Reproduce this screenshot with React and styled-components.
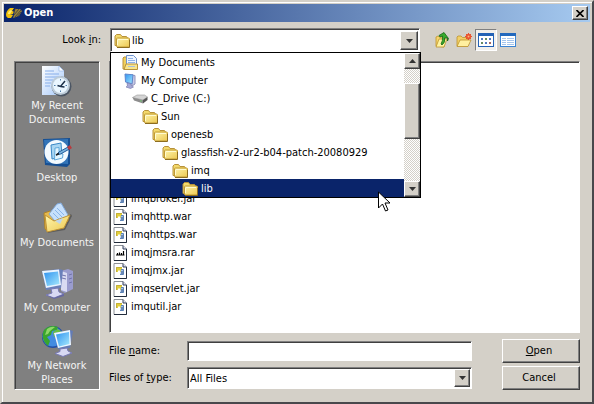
import React from 'react';
import styled, { createGlobalStyle, css } from 'styled-components';

const FACE = '#d4d0c8';
const NAVY = '#0a246a';
const SHADOW = '#808080';
const DARK = '#404040';

const GlobalStyle = createGlobalStyle`
  * {
    box-sizing: border-box;
  }
  body {
    margin: 0;
    background: ${FACE};
    color: #000;
  }
  body, button, input, select {
    font-family: 'DejaVu Sans Condensed', 'DejaVu Sans', sans-serif;
    font-size: 11px;
    line-height: 14px;
  }
  svg {
    display: block;
    flex: none;
  }
`;

const raised = css`
  border: 1px solid;
  border-color: #fff ${DARK} ${DARK} #fff;
  box-shadow: inset -1px -1px ${SHADOW};
  background: ${FACE};
`;

const sunken = css`
  border: 1px solid;
  border-color: ${SHADOW} #fff #fff ${SHADOW};
  box-shadow: inset 1px 1px ${DARK};
`;

const Dialog = styled.div`
  min-height: 100vh;
  display: flex;
  flex-direction: column;
  padding: 2px 2px 0;
  border: 2px solid;
  border-color: ${FACE} #48484c #48484c ${FACE};
  box-shadow: inset 1px 1px #fff;
  background: ${FACE};
`;

const TitleBar = styled.header`
  height: 18px;
  display: flex;
  align-items: center;
  gap: 2px;
  padding: 0 2px;
  background: linear-gradient(to right, ${NAVY}, #a6caf0);
`;

const Title = styled.h1`
  flex: 1;
  margin: 0;
  color: #fff;
  font-size: 11px;
  line-height: 14px;
`;

const CloseButton = styled.button`
  ${raised}
  width: 16px;
  height: 14px;
  padding: 0 0 0 3px;
`;

const LookRow = styled.div`
  display: flex;
  align-items: center;
  padding: 6px 10px 9px 0;
`;

const LookLabel = styled.label`
  width: 97px;
  margin-right: 9px;
  text-align: right;
`;

const Combo = styled.div`
  position: relative;
  flex: 1;
`;

const ComboButton = styled.button`
  ${sunken}
  width: 100%;
  height: 24px;
  display: flex;
  align-items: center;
  gap: 2px;
  padding: 2px 1px 1px 3px;
  background: #fff;
  text-align: left;
`;

const ComboText = styled.span`
  flex: 1;
`;

const Arrow = styled.span`
  ${raised}
  width: 18px;
  align-self: stretch;
  display: flex;
  align-items: center;
  justify-content: center;
`;

const Popup = styled.div`
  position: absolute;
  z-index: 1;
  top: 24px;
  left: 0;
  right: -1px;
  display: flex;
  border: 1px solid #000;
  background: #fff;
`;

const Tree = styled.ul`
  flex: 1;
  margin: 0;
  padding: 0;
  list-style: none;
`;

const TreeItem = styled.li`
  height: 18px;
  display: flex;
  align-items: center;
  gap: 3px;
  padding-top: 2px;
  padding-left: ${({ $level }) => 1 + $level * 10}px;
  background: ${({ $selected }) => ($selected ? NAVY : '#fff')};
  color: ${({ $selected }) => ($selected ? '#fff' : '#000')};
  white-space: nowrap;
`;

const ScrollBar = styled.div`
  width: 16px;
  display: flex;
  flex-direction: column;
  background: repeating-conic-gradient(${FACE} 0 25%, #fff 0 50%) 0 0 / 2px 2px;
`;

const ScrollButton = styled.button`
  ${raised}
  height: 16px;
  display: flex;
  align-items: center;
  justify-content: center;
  padding: 0;
`;

const Thumb = styled.div`
  ${raised}
  height: 56px;
  margin: 14px 0 auto;
`;

const Pointer = styled.svg`
  position: absolute;
  z-index: 2;
  left: 268px;
  top: 163px;
`;

const Toolbar = styled.div`
  width: 160px;
  display: flex;
  align-items: center;
  padding-left: 11px;
`;

const ToolButton = styled.button`
  width: 22px;
  height: 22px;
  display: flex;
  align-items: center;
  justify-content: center;
  padding: 0;
  border: 1px solid transparent;
  background: none;
  ${({ $pressed }) =>
    $pressed &&
    css`
      border-color: ${SHADOW} #fff #fff ${SHADOW};
      background: #f2f0ec;
    `}
`;

const Content = styled.main`
  flex: 1;
  display: grid;
  grid-template-columns: 86px 1fr;
  gap: 9px;
  padding: 0 10px 12px;
`;

const Places = styled.nav`
  ${sunken}
  padding: 1px;
  background: ${SHADOW};
`;

const Place = styled.a`
  height: 65px;
  display: flex;
  flex-direction: column;
  align-items: center;
  justify-content: center;
  gap: 2px;
  color: #f4f4f4;
  text-align: center;
  text-decoration: none;
  white-space: pre-line;
`;

const Right = styled.div`
  display: flex;
  flex-direction: column;
`;

const FileList = styled.ul`
  ${sunken}
  flex: 1;
  margin: 0;
  padding: 127px 3px 16px;
  background: #fff;
  list-style: none;
`;

const FileItem = styled.li`
  height: 18px;
  display: flex;
  align-items: center;
  gap: 3px;
  padding-top: 2px;
`;

const Form = styled.form`
  display: grid;
  grid-template-columns: 78px 1fr 78px;
  grid-template-rows: 24px 24px;
  row-gap: 3px;
  align-items: center;
  margin-top: 6px;
`;

const field = css`
  ${sunken}
  width: 100%;
  padding: 0 2px;
  border-radius: 0;
  background: #fff;
  outline: none;
`;

const TextInput = styled.input`
  ${field}
  display: block;
  height: 20px;
`;

const SelectBox = styled.div`
  display: grid;
  grid-template-columns: 1fr 18px;

  select {
    ${field}
    grid-area: 1 / 1 / 2 / 3;
    height: 22px;
    padding-top: 2px;
    appearance: none;
    color: #000;
  }
  ${Arrow} {
    grid-area: 1 / 2;
    z-index: 1;
    margin: 2px 2px 2px 0;
    width: 16px;
    pointer-events: none;
  }
`;

const PushButton = styled.button`
  ${raised}
  height: 24px;
  padding: 0 4px 0 0;
`;

const FieldCell = styled.div`
  margin-right: 30px;
`;

function Triangle({ up }) {
  return (
    <svg width="7" height="4" viewBox="0 0 7 4">
      <path d={up ? 'M0 4h7L3.5 0z' : 'M0 0h7L3.5 4z'} fill="#333" />
    </svg>
  );
}

function FolderIcon() {
  return (
    <svg width="16" height="16" viewBox="0 0 16 16">
      <path d="M1 12.5V3l1.500-1.500h4L8 3.500h4.500L13.500 5v8z" fill="#f3d96b" stroke="#b8923a" />
      <path d="M3.500 5h11q1 0 1 1v7q0 1-1 1h-11q-1 0-1-1V6q0-1 1-1z" fill="url(#folder)" stroke="#c19a35" />
      <path d="M4 6.500h10M3.500 7v5" stroke="#fffbd0" fill="none" />
      <path d="M3 14.500h12.500V7" stroke="#8d6d20" fill="none" />
    </svg>
  );
}

function DocumentsIcon() {
  return (
    <svg width="16" height="16" viewBox="0 0 16 16">
      <path d="M1 14V3l1-1h4v12z" fill="#f0cf5c" stroke="#b8923a" />
      <path d="M4.500 11V.5h7l3 3V11z" fill="#eef5ff" stroke="#6f93cf" />
      <path d="M6 3.500h5M6 5.500h7M6 7.500h7" stroke="#8fb2e8" />
      <path d="M2 14.500L4 9h11.500v5.500z" fill="#f8e58c" stroke="#b8923a" />
      <path d="M6 11.500h7" stroke="#a9bfe0" />
    </svg>
  );
}

function ComputerIcon() {
  return (
    <svg width="16" height="16" viewBox="0 0 16 16">
      <path d="M10 2l3 .5V11l-3 2z" fill="#c9cbe6" stroke="#9294bd" />
      <path d="M3 1l8 .8-1 9L3.500 9z" fill="url(#screen)" stroke="#5f86cc" />
      <path d="M5 10l4 1 .5 2 2 1-3 1.500L4 14l1.500-1z" fill="#a7a9d6" stroke="#7173a9" strokeWidth=".6" />
    </svg>
  );
}

function DriveIcon() {
  return (
    <svg width="16" height="16" viewBox="0 0 16 16">
      <path d="M.5 6.500L5 4h7.500l3 2-4.500 3z" fill="#d4d4d4" stroke="#999" strokeWidth=".6" />
      <path d="M.5 6.500L11 9v3.500L2 9.500z" fill="#8d8d8d" />
      <path d="M11 9l4.500-3v3L11 12.500z" fill="#555" />
      <circle cx="9" cy="10" r=".7" fill="#6d6" />
    </svg>
  );
}

function JarIcon() {
  return (
    <svg width="15" height="16" viewBox="0 0 15 16">
      <path d="M1 .5h9l3.500 3.500v11.500H1z" fill="#fff" stroke="#8c9096" />
      <path d="M13.500 4v11.500H1" fill="none" stroke="#222c3c" />
      <path d="M10 .5V4h3.500" fill="#dde" stroke="#33405a" />
      <rect x="3" y="4" width="6" height="5" fill="#e2cf3c" />
      <path d="M3.500 9V4.500H9" fill="none" stroke="#c2ae38" />
      <path d="M8 6.500h2.500v5H7" fill="#a9c4e6" stroke="#5c83b6" />
      <path d="M5 7.500h2v2H5z" fill="#fff" />
      <path d="M9 8v3" stroke="#2c4e88" />
    </svg>
  );
}

function RarIcon() {
  return (
    <svg width="15" height="16" viewBox="0 0 15 16">
      <path d="M1 .5h9l3.500 3.500v11.500H1z" fill="#fff" stroke="#8c9096" />
      <path d="M13.500 4v11.500H1" fill="none" stroke="#222c3c" />
      <path d="M10 .5V4h3.500" fill="#dde" stroke="#33405a" />
      <path d="M3 10h8.500M4.500 10V8M6.500 10V7.500M8.500 10V8M10.500 10V6" fill="none" stroke="#000" strokeWidth="1.200" />
    </svg>
  );
}

function RecentIcon() {
  return (
    <svg width="32" height="32" viewBox="0 0 32 32">
      <path d="M1 1h17l5 5v24H1z" fill="url(#paper)" />
      <path d="M18 1v5h5z" fill="#fff" stroke="#98b7ea" strokeWidth=".7" />
      <path d="M4 6h9M4 9h14M4 12h14M4 15h8M4 18h6M4 21h5" stroke="#86ade9" />
      <circle cx="20.500" cy="21.500" r="10" fill="#4c5664" />
      <circle cx="19.500" cy="20.500" r="9.500" fill="#bccbd8" />
      <circle cx="19.500" cy="20.500" r="7.500" fill="#eaf6ff" />
      <path d="M19.500 14v1.500M19.500 25.500V27M13 20.500h1.500M24.500 20.500H26" stroke="#4d7caa" />
      <path d="M24 16l-4.500 5.500-3-1M19.500 21.500l4 .5" stroke="#1b2f48" strokeWidth="1.500" fill="none" />
    </svg>
  );
}

function DesktopIcon() {
  return (
    <svg width="32" height="32" viewBox="0 0 32 32">
      <path d="M2 2l27-1v26l-3 3-22-2z" fill="#174f92" />
      <path d="M3 3l24-1v25L5 26z" fill="#3274b8" />
      <circle cx="15.500" cy="15" r="12" fill="#f3faff" />
      <path d="M10 8l10-2 1 14-10 2z" fill="#a9d6f2" stroke="#3988c6" />
      <path d="M14 11l4-.5v6l4 .5-.5 4-8 2z" fill="#e3f6ff" stroke="#60a9db" />
      <path d="M15 18l3-3 9-5 1.500 2-9 5z" fill="#79b4df" stroke="#215b9b" />
      <path d="M26 10l3-2 2 3-3 2z" fill="#b83a3e" />
      <path d="M15 18l3-1.500" stroke="#222" strokeWidth="1.500" />
    </svg>
  );
}

function MyDocumentsIcon() {
  return (
    <svg width="32" height="32" viewBox="0 0 32 32">
      <path d="M6 31L24 28l7-14-1-2z" fill="#444" opacity=".6" />
      <path d="M3 11l6-2 2 2 16 1v7L7 29l-3-2z" fill="#e6b94d" stroke="#ad8228" />
      <path d="M8 12l8-10 4-1 7 12-9 11z" fill="#c7e0fc" stroke="#80a9db" />
      <path d="M14 8l7 7M12 11l7 7M16 6l7 7" stroke="#88b5eb" />
      <path d="M4 13l9 6 16-6-6 13-17 4z" fill="url(#folder)" stroke="#bf9335" />
      <path d="M14 19l8-3-3 6z" fill="#bdd5ee" />
    </svg>
  );
}

function MyComputerIcon() {
  return (
    <svg width="32" height="32" viewBox="0 0 32 32">
      <path d="M20 4l7-2 5 2v18l-8 4-4-2z" fill="#9a9cce" />
      <path d="M20 4l6 2v19l-6-2z" fill="#d9dbf2" />
      <path d="M21 8l4 1M21 11l4 1M28 8l3-1M28 12l3-1M28 16l3-1" stroke="#7173ac" />
      <path d="M1 4l17-2 4 1-2 18-15 2z" fill="#6a80bb" />
      <path d="M1 4l17-1.500L20 18 5 21z" fill="#e9f4ff" />
      <path d="M3 6l14-1.500L18.500 17 6 19z" fill="url(#screen)" />
      <path d="M10 22l7-1 1 4 5 2-10 4-8-3 6-2z" fill="#d8d9f3" stroke="#7779b5" />
      <path d="M5 28l8 3 10-4v2l-10 3z" fill="#6668a1" />
    </svg>
  );
}

function NetworkIcon() {
  return (
    <svg width="32" height="32" viewBox="0 0 32 32">
      <circle cx="12" cy="12" r="11" fill="#234fa6" />
      <circle cx="11.500" cy="11.500" r="10" fill="#438be0" />
      <path d="M3 5Q9-1 17 2l-1 3-5 1-1 4-4 2 3 4-2 5Q-1 14 3 5z" fill="#39a52e" />
      <path d="M6 4q4-3 8-2l-5 4-2 3-3 1z" fill="#8ed768" />
      <path d="M12 7l5-3 4 3-3 4-5 1z" fill="#68c040" />
      <path d="M13 8l16-3 3 1-3 17-12 1z" fill="#637bb5" />
      <path d="M13 8l16-3 1 15-13 3z" fill="#edf7ff" />
      <path d="M15 9.500L28 7l.5 12-10.500 2.500z" fill="url(#screen)" />
      <path d="M19 24l7-1 1 3 4 2-9 3.500-8-3 5-2z" fill="#d8d9f3" stroke="#7779b5" />
    </svg>
  );
}

function AppIcon() {
  return (
    <svg width="16" height="12" viewBox="0 0 16 12">
      <path d="M0 8q0-4 4-7h4L6 4h2l-1 3H4l3 1-2 3H2q-2-1-2-3z" fill="#f2c20c" />
      <path d="M2 7q0-3 3-4l1 1-2 3z" fill="#ffed75" />
      <path d="M9 2h5l2 2-3 5-6 2 1-3z" fill="#9b8437" />
      <path d="M8 8l5-6M9 10l6-7M11 10l4-5M7 5l3-4" stroke="#363a46" strokeWidth=".8" />
    </svg>
  );
}

function UpIcon() {
  return (
    <svg width="16" height="16" viewBox="0 0 16 16">
      <path d="M2 5l2-1 1 1h5v10l-8-1z" fill="#f5d66b" stroke="#bd932f" strokeWidth=".8" />
      <path d="M2 15L5 7h8l-3 8z" fill="#fff3a1" stroke="#bd932f" strokeWidth=".8" />
      <path d="M8 13q4-3 2.500-7H13.500V9l1-2.500L10 .5 5 3.500l1 1.500 2.500-1Q9 9 7 12z" fill="#38ab2c" stroke="#196418" strokeWidth=".8" />
    </svg>
  );
}

function NewFolderIcon() {
  return (
    <svg width="16" height="16" viewBox="0 0 16 16">
      <path d="M1 14V5l1-1h3l1.500 1.500H12V14z" fill="#f2d067" stroke="#bd932f" strokeWidth=".8" />
      <path d="M1 14.500L4 8h11l-3 6.500z" fill="#fff0a0" stroke="#bd932f" strokeWidth=".8" />
      <circle cx="12.500" cy="4.500" r="2.700" fill="#ed5932" />
      <path d="M12.500 1v7M9 4.500h7M10 2l5 5M15 2l-5 5" stroke="#e8502e" />
      <circle cx="12.500" cy="4.500" r="1" fill="#ffb37c" />
    </svg>
  );
}

function ListIcon() {
  return (
    <svg width="16" height="16" viewBox="0 0 16 16" shapeRendering="crispEdges">
      <path d="M0 1h16v14H0z" fill="#2462b5" />
      <path d="M1 4h14v10H1z" fill="#fff" />
      <path d="M3 6h2v2H3zM11 6h2v2h-2zM7 10h2v2H7z" fill="#527ac1" />
      <path d="M7 6h2v2H7zM3 10h2v2H3z" fill="#688b61" />
      <path d="M11 10h2v2h-2z" fill="#a26863" />
    </svg>
  );
}

function DetailsIcon() {
  return (
    <svg width="16" height="16" viewBox="0 0 16 16" shapeRendering="crispEdges">
      <path d="M0 1h16v14H0z" fill="#3d85d4" />
      <path d="M0 1h16v3H0z" fill="#2268bd" />
      <path d="M1 4h14v10H1z" fill="#fff" />
      <path d="M2 6.500h4M7 6.500h7M2 8.500h4M7 8.500h7M2 10.500h4M7 10.500h7M2 12.500h4M7 12.500h7" stroke="#a5c5ec" />
    </svg>
  );
}

// gradients shared by the icons above
function Gradients() {
  return (
    <svg width="0" height="0" style={{ position: 'absolute' }} aria-hidden="true">
      <defs>
        <linearGradient id="folder" x1="0" y1="0" x2="1" y2="1">
          <stop offset="0" stopColor="#fff6ae" />
          <stop offset="1" stopColor="#ecc750" />
        </linearGradient>
        <linearGradient id="screen" x1="0" y1="0" x2="1" y2="1">
          <stop offset="0" stopColor="#2f93f0" />
          <stop offset="1" stopColor="#a6e9fd" />
        </linearGradient>
        <linearGradient id="paper" x1="0" y1="0" x2="1" y2="1">
          <stop offset="0" stopColor="#fff" />
          <stop offset="1" stopColor="#a4c8fa" />
        </linearGradient>
      </defs>
    </svg>
  );
}

const places = [
  { label: 'My Recent\nDocuments', Icon: RecentIcon },
  { label: 'Desktop', Icon: DesktopIcon },
  { label: 'My Documents', Icon: MyDocumentsIcon },
  { label: 'My Computer', Icon: MyComputerIcon },
  { label: 'My Network\nPlaces', Icon: NetworkIcon },
];

const tree = [
  { label: 'My Documents', level: 1, Icon: DocumentsIcon },
  { label: 'My Computer', level: 1, Icon: ComputerIcon },
  { label: 'C_Drive (C:)', level: 2, Icon: DriveIcon },
  { label: 'Sun', level: 3, Icon: FolderIcon },
  { label: 'openesb', level: 4, Icon: FolderIcon },
  { label: 'glassfish-v2-ur2-b04-patch-20080929', level: 5, Icon: FolderIcon },
  { label: 'imq', level: 6, Icon: FolderIcon },
  { label: 'lib', level: 7, Icon: FolderIcon },
];

const files = [
  'imqbroker.jar',
  'imqhttp.war',
  'imqhttps.war',
  'imqjmsra.rar',
  'imqjmx.jar',
  'imqservlet.jar',
  'imqutil.jar',
];

class App extends React.Component {
  state = { folder: 'lib' };

  render() {
    const { folder } = this.state;
    return (
      <Dialog role="dialog" aria-labelledby="title">
        <GlobalStyle />
        <Gradients />
        <TitleBar>
          <AppIcon />
          <Title id="title">Open</Title>
          <CloseButton aria-label="Close">
            <svg width="8" height="7" viewBox="0 0 8 7">
              <path d="M.5 0l7 7M7.500 0l-7 7" stroke="#000" strokeWidth="1.600" />
            </svg>
          </CloseButton>
        </TitleBar>
        <LookRow>
          <LookLabel htmlFor="look-in">
            Look <u>i</u>n:
          </LookLabel>
          <Combo>
            <ComboButton id="look-in" role="combobox" aria-expanded="true" aria-controls="folders">
              <FolderIcon />
              <ComboText>{folder}</ComboText>
              <Arrow>
                <Triangle />
              </Arrow>
            </ComboButton>
            <Popup>
              <Tree id="folders" role="listbox">
                {tree.map(({ label, level, Icon }) => (
                  <TreeItem
                    key={label}
                    role="option"
                    aria-selected={label === folder}
                    $level={level}
                    $selected={label === folder}
                    onClick={() => this.setState({ folder: label })}
                  >
                    <Icon />
                    {label}
                  </TreeItem>
                ))}
              </Tree>
              <ScrollBar>
                <ScrollButton aria-label="Scroll up">
                  <Triangle up />
                </ScrollButton>
                <Thumb />
                <ScrollButton aria-label="Scroll down">
                  <Triangle />
                </ScrollButton>
              </ScrollBar>
            </Popup>
            <Pointer width="13" height="21" viewBox="0 0 13 21">
              <path d="M.5 1v16l4-4 3 7 2.500-1-3-7h5z" fill="#fff" stroke="#000" />
            </Pointer>
          </Combo>
          <Toolbar>
            <ToolButton aria-label="Up one level">
              <UpIcon />
            </ToolButton>
            <ToolButton aria-label="New folder">
              <NewFolderIcon />
            </ToolButton>
            <ToolButton aria-label="List" aria-pressed="true" $pressed>
              <ListIcon />
            </ToolButton>
            <ToolButton aria-label="Details">
              <DetailsIcon />
            </ToolButton>
          </Toolbar>
        </LookRow>
        <Content>
          <Places>
            {places.map(({ label, Icon }) => (
              <Place key={label} href="#">
                <Icon />
                {label}
              </Place>
            ))}
          </Places>
          <Right>
            <FileList>
              {files.map(name => (
                <FileItem key={name}>
                  {name.endsWith('.rar') ? <RarIcon /> : <JarIcon />}
                  {name}
                </FileItem>
              ))}
            </FileList>
            <Form onSubmit={e => e.preventDefault()}>
              <label htmlFor="file-name">
                File <u>n</u>ame:
              </label>
              <FieldCell>
                <TextInput id="file-name" type="text" />
              </FieldCell>
              <PushButton type="submit">
                <u>O</u>pen
              </PushButton>
              <label htmlFor="file-type">
                Files of <u>t</u>ype:
              </label>
              <FieldCell>
                <SelectBox>
                  <select id="file-type">
                    <option>All Files</option>
                  </select>
                  <Arrow>
                    <Triangle />
                  </Arrow>
                </SelectBox>
              </FieldCell>
              <PushButton type="button">Cancel</PushButton>
            </Form>
          </Right>
        </Content>
      </Dialog>
    );
  }
}

export default App;
